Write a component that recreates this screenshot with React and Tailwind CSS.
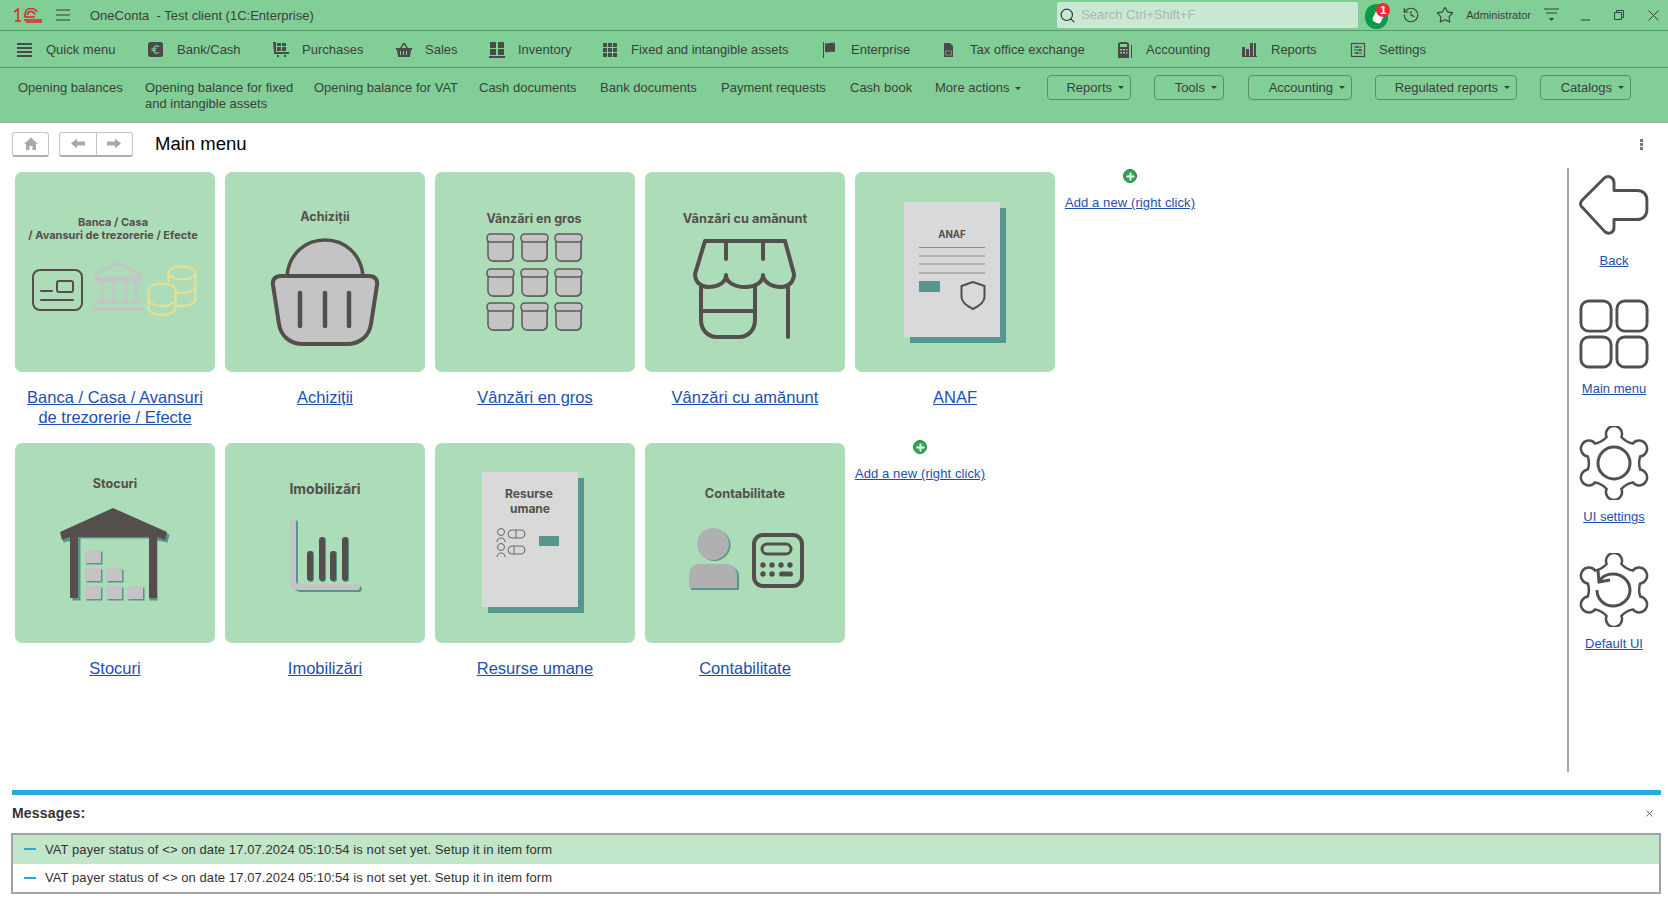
import { Search, History, Star, X, Plus } from "lucide-react";

const ink = "#544f4c";
const gray = "#c4c4c4";
const teal = "#56968f";
const titleFont = "Inter, 'Open Sans', sans-serif";

function TileTitle({ x = 100, y, size = 12, children }) {
  return (
    <text x={x} y={y} textAnchor="middle" fontFamily={titleFont} fontWeight="700" fontSize={size} fill={ink}>
      {children}
    </text>
  );
}

function BancaArt() {
  return (
    <>
      <TileTitle x={98} y={54} size={11}>Banca / Casa</TileTitle>
      <TileTitle x={98} y={67} size={11}>/ Avansuri de trezorerie / Efecte</TileTitle>
      <rect x="18" y="98" width="49" height="40" rx="7" fill="none" stroke={ink} strokeWidth="2" />
      <rect x="42" y="109" width="16" height="11" rx="2" fill="none" stroke={ink} strokeWidth="2" />
      <path d="M26 119H37M26 128H58" stroke={ink} strokeWidth="2" strokeLinecap="round" />
      <path d="M80 106V102L102 91L124 102V106Z" fill="none" stroke={gray} strokeWidth="3" strokeLinejoin="round" />
      <path d="M87 107V129M99 107V129M111 107V129M121 107V129M80 108H127M80 130H125" stroke={gray} strokeWidth="3" />
      <path d="M78 137H127" stroke={gray} strokeWidth="3.5" strokeLinecap="round" />
      <g fill="none" stroke="#ecdf8c" strokeWidth="2">
        <ellipse cx="167" cy="101" rx="13.5" ry="6.5" />
        <path d="M153.500 101V127C153.500 131 160 134 167 134S180.500 131 180.500 127V101M153.500 114C153.500 118 160 121 167 121S180.500 118 180.500 114" />
        <ellipse cx="147" cy="118" rx="13.500" ry="6.500" fill="#addcb9" />
        <path d="M133.500 118V136C133.500 140 140 143 147 143S160.500 140 160.500 136V118M133.500 127C133.500 131 140 134 147 134S160.500 131 160.500 127" fill="#addcb9" />
      </g>
    </>
  );
}

function BasketArt() {
  return (
    <>
      <TileTitle y={49} size={12.5}>Achiziții</TileTitle>
      <path d="M62 104C64 82 80 68 100 68S136 82 138 104Z" fill={gray} stroke={ink} strokeWidth="3.500" />
      <path d="M57 105H145C151 105 154 109 153 114L147 153C145 166 135 173 123 173H79C67 173 57 166 55 153L49 114C48 109 51 105 57 105Z" fill={teal} />
      <path d="M56 104H144C150 104 153 108 152 113L146 152C144 165 134 172 122 172H78C66 172 56 165 54 152L48 113C47 108 50 104 56 104Z" fill={gray} stroke={ink} strokeWidth="4" />
      <path d="M75 121V154M100 121V154M124 121V154" stroke={ink} strokeWidth="4.500" strokeLinecap="round" />
    </>
  );
}

function JarsArt() {
  const xs = [52, 86, 120];
  const ys = [62, 97, 131];
  return (
    <>
      <TileTitle x={99} y={51} size={12.5}>Vânzări en gros</TileTitle>
      {ys.map((y) =>
        xs.map((x) => (
          <g key={x + "-" + y}>
            <rect x={x + 2} y={y + 2} width="25" height="26" rx="5" fill={teal} />
            <rect x={x + 1} y={y + 1} width="25" height="26" rx="5" fill={gray} stroke="#5f5a58" strokeWidth="1.500" />
            <rect x={x} y={y} width="27" height="8" rx="3.500" fill={gray} stroke="#5f5a58" strokeWidth="1.500" />
          </g>
        ))
      )}
    </>
  );
}

function ShopArt() {
  return (
    <>
      <TileTitle y={51} size={12.800}>Vânzări cu amănunt</TileTitle>
      <g fill="none" stroke={ink} strokeWidth="4" strokeLinecap="round" strokeLinejoin="round">
        <path d="M60 69H140L149 102C149 110 143 115 137 115C124 115 118 108 118 103C118 110 111 115 100 115C89 115 81 110 81 103C81 110 74 115 63 115C56 115 50 110 50 102Z" />
        <path d="M81 69V87M118 69V87M143 115V165" />
        <path d="M56 115V148C56 158 63 165 72 165H94C103 165 110 158 110 148V115M56 139H110" />
      </g>
    </>
  );
}

function PaperArt({ x, y, children }) {
  return (
    <>
      <rect x={x + 6} y={y + 6} width="96" height="135" fill={teal} />
      <rect x={x} y={y} width="96" height="135" fill="#d9d9d9" />
      {children}
    </>
  );
}

function AnafArt() {
  return (
    <PaperArt x={49} y={30}>
      <TileTitle x={97} y={66} size={9.700}>ANAF</TileTitle>
      <path d="M64 75.500H130M64 92H130" stroke="#7b7876" strokeWidth="0.800" />
      <path d="M64 84H130M64 101H130" stroke="#a3a2a1" strokeWidth="1.300" />
      <rect x="64" y="109" width="21" height="11" fill={teal} />
      <path d="M118 110L129.500 114V125C129.500 130 124 134 118 137C112 134 106.500 130 106.500 125V114Z" fill="none" stroke={ink} strokeWidth="2" strokeLinejoin="round" />
    </PaperArt>
  );
}

function StockArt() {
  const boxes = [[70, 107], [70, 125], [91, 125], [70, 143], [91, 143], [112, 143]];
  return (
    <>
      <TileTitle x={100} y={45} size={12.600}>Stocuri</TileTitle>
      <path d="M99 66L153 90L151 98L141 96V156H133V94H64V156H56V96L47 98L45 90Z" fill={teal} transform="translate(1.500 1.500)" />
      <path d="M98 65L152 89L150 97L142 94V155H134V94H63V155H55V94L47 97L45 89Z" fill={ink} />
      {boxes.map(([x, y]) => (
        <g key={x + "-" + y}>
          <rect x={x + 1.500} y={y + 1.500} width="16" height="13" fill={teal} />
          <rect x={x} y={y} width="16" height="13" fill={gray} />
        </g>
      ))}
    </>
  );
}

function ChartArt() {
  return (
    <>
      <TileTitle y={51} size={14}>Imobilizări</TileTitle>
      <path d="M69 79V138C69 142 71 145 75 145H133" fill="none" stroke={teal} strokeWidth="6" strokeLinecap="round" transform="translate(1 1)" />
      <path d="M68 79V138C68 142 70 144 74 144H132" fill="none" stroke={gray} strokeWidth="6" strokeLinecap="round" />
      {[[85, 111], [97, 97], [108, 111], [120, 97]].map(([x, y]) => (
        <g key={x}>
          <path d={`M${x + 1} ${y}V136`} stroke={teal} strokeWidth="6" strokeLinecap="round" />
          <path d={`M${x} ${y}V135`} stroke={ink} strokeWidth="6" strokeLinecap="round" />
        </g>
      ))}
    </>
  );
}

function HrArt() {
  return (
    <PaperArt x={47} y={29}>
      <TileTitle x={94} y={55} size={12}>Resurse</TileTitle>
      <TileTitle x={95} y={70} size={12}>umane</TileTitle>
      <g fill="none" stroke="#6b6563" strokeWidth="1">
        <circle cx="66" cy="89" r="3.500" />
        <path d="M62 99C62 96 64 95 66 95S70 96 70 99" />
        <rect x="73" y="87" width="17" height="8" rx="4" />
        <path d="M81 87V95" />
        <circle cx="66" cy="104" r="3.500" />
        <path d="M62 114C62 111 64 110 66 110S70 111 70 114" />
        <rect x="73" y="103" width="17" height="8" rx="4" />
        <path d="M79 103V111" />
      </g>
      <rect x="104" y="93" width="20" height="10" fill={teal} />
    </PaperArt>
  );
}

function AccountingArt() {
  return (
    <>
      <TileTitle y={55} size={12.800}>Contabilitate</TileTitle>
      <circle cx="69.500" cy="102" r="16" fill={teal} />
      <circle cx="68" cy="101" r="16" fill="#b0b0b0" />
      <path d="M46 146V133C46 126 51 122 57 122H81C88 122 94 126 94 133V147H46Z" fill={teal} />
      <path d="M44 145V132C44 125 49 121 56 121H80C87 121 92 125 92 132V145Z" fill="#b0b0b0" />
      <rect x="109" y="92" width="48" height="51" rx="9" fill="none" stroke={ink} strokeWidth="4" />
      <rect x="117" y="101" width="29" height="10" rx="5" fill="none" stroke={ink} strokeWidth="3" />
      {[118, 127, 136, 145].map((x) => <circle key={x} cx={x} cy="122" r="2.700" fill={ink} />)}
      {[118, 127].map((x) => <circle key={x} cx={x} cy="131" r="2.700" fill={ink} />)}
      <rect x="134" y="128.500" width="14" height="5" rx="2.500" fill={ink} />
    </>
  );
}

function Tile({ label, children }) {
  return (
    <div className="w-[200px] h-[271px] shrink-0">
      <div className="w-[200px] h-[200px] rounded-[7px] bg-[#addcb9]">
        <svg viewBox="0 0 200 200" width="200" height="200">{children}</svg>
      </div>
      <a className="block mt-[15px] px-[6px] text-center text-[16.5px] leading-[20px] text-[#1c4fb0] underline">{label}</a>
    </div>
  );
}

function AddNew() {
  return (
    <div className="w-[130px] shrink-0 flex flex-col items-center text-[13px] tracking-[0.1px] text-[#1c4fb0] underline">
      <span className="mt-[-3px] w-[14px] h-[14px] rounded-full bg-[#2fa84f] border border-[#1d8a3c] flex items-center justify-center">
        <Plus size={11} strokeWidth={4} color="#fff" />
      </span>
      <a className="mt-[12px] leading-[16px] whitespace-nowrap">Add a new (right click)</a>
    </div>
  );
}

function gearPath(cx, cy) {
  let d = "";
  const pt = (deg, r) => {
    const a = (deg * Math.PI) / 180;
    return (cx + r * Math.cos(a)).toFixed(1) + " " + (cy + r * Math.sin(a)).toFixed(1);
  };
  for (let i = 0; i < 6; i++) {
    const a = -90 + i * 60;
    d += (i === 0 ? "M" : "L") + pt(a - 16, 27) + "A8 8 0 1 1 " + pt(a + 16, 27);
    d += "Q" + pt(a + 30, 24) + " " + pt(a + 44, 27);
  }
  return d + "Z";
}

function SideItem({ label, children, className, labelClass }) {
  return (
    <div className={"flex flex-col items-center " + className}>
      {children}
      <a className={"text-[13px] leading-[16px] text-[#1c4fb0] underline " + labelClass}>{label}</a>
    </div>
  );
}

// small menu glyphs
const MenuIcons = {
  quick: <path d="M0 1H15V3H0ZM0 5H15V7H0ZM0 9H15V11H0ZM0 13H15V15H0Z" />,
  bank: <><rect x="0" y="0" width="15" height="15" rx="2.500" /><path d="M11 4.500C8 3 6 4.500 5.500 7.500C6 11 8 12 11 10.500" fill="none" stroke="#81cf97" strokeWidth="1.300" /><path d="M3.500 6.800H8.500M3.500 8.500H8" stroke="#81cf97" /></>,
  purchases: <path d="M0 0H3V10H16V12H1V10ZM4 1H8V4H4ZM9 1H13V4H9ZM4 5H8V9H4ZM9 5H13V9H9ZM4 13H6V15H4ZM11 13H13V15H11Z" />,
  sales: <path d="M0 6H4L7 1H9L12 6H16V8H15L14 15H2L1 8H0ZM5.500 6H10.500L8 2.500ZM4 9V13H5V9ZM7 9V13H8V9ZM10 9V13H11V9Z" fillRule="evenodd" />,
  inventory: <path d="M1 0H7V6H1ZM9 0H15V6H9ZM1 7H7V13H1ZM9 7H15V13H9ZM0 14H16V16H0Z" />,
  fixed: <path d="M1 1H5V5H1ZM6 1H10V5H6ZM11 1H15V5H11ZM1 6H5V10H1ZM6 6H10V10H6ZM11 6H15V10H11ZM1 11H5V15H1ZM6 11H10V15H6ZM11 11H15V15H11Z" />,
  enterprise: <path d="M1 0H2V16H1ZM3 1C6 2.500 8 0 13 1V10C8 9 6 11 3 10Z" />,
  tax: <><path d="M3 1H9L12 4V15H3Z" /><path d="M4.500 9H10.500V13H4.500Z" fill="none" stroke="#81cf97" strokeWidth="0.600" /></>,
  accounting: <><path d="M1 3C1 1 2 0 4 0H9C11 0 12 1 12 3V16H1Z" /><rect x="3" y="2" width="7" height="3" fill="#81cf97" /><path d="M3 7H5V8.500H3ZM6 7H8V8.500H6ZM9 7H10.500V8.500H9ZM3 10H5V11.500H3ZM6 10H8V11.500H6ZM9 10H10.500V11.500H9Z" fill="#81cf97" /><path d="M14 3H15V16H14Z" /></>,
  reports: <path d="M0 5H3V14H0ZM4 7H7V14H4ZM8 1H11V14H8ZM12 1H14V14H12ZM0 14H15V15H0Z" />,
  settings: <><rect x="1.500" y="1.500" width="13" height="13" fill="none" stroke="#4a4a4a" strokeWidth="1.200" /><path d="M4 5H12M4 8H12M4 11H12" stroke="#4a4a4a" /><path d="M6 4H8V6H6ZM9 7H11V9H9ZM6 10H8V12H6Z" /></>,
};

const menuItems = [
  ["quick", "Quick menu", "w-[131px]"],
  ["bank", "Bank/Cash", "w-[125px]"],
  ["purchases", "Purchases", "w-[123px]"],
  ["sales", "Sales", "w-[93px]"],
  ["inventory", "Inventory", "w-[113px]"],
  ["fixed", "Fixed and intangible assets", "w-[220px]"],
  ["enterprise", "Enterprise", "w-[119px]"],
  ["tax", "Tax office exchange", "w-[176px]"],
  ["accounting", "Accounting", "w-[125px]"],
  ["reports", "Reports", "w-[108px]"],
  ["settings", "Settings", "w-[90px]"],
];

const actions = [
  ["Opening balances", "w-[127px]"],
  ["Opening balance for fixed and intangible assets", "w-[169px]"],
  ["Opening balance for VAT", "w-[165px]"],
  ["Cash documents", "w-[121px]"],
  ["Bank documents", "w-[121px]"],
  ["Payment requests", "w-[129px]"],
  ["Cash book", "w-[85px]"],
];

const dropdowns = [
  ["Reports", "w-[84px] mr-[23px]"],
  ["Tools", "w-[70px] mr-[24px]"],
  ["Accounting", "w-[104px] mr-[23px]"],
  ["Regulated reports", "w-[142px] mr-[23px]"],
  ["Catalogs", "w-[91px]"],
];

function Caret() {
  return <span className="inline-block ml-[6px] align-middle w-0 h-0 border-x-[3px] border-x-transparent border-t-[3px] border-t-[#3b3f3b]" />;
}

export default function App() {
  return (
    <div className="w-[1668px] h-[906px] overflow-hidden bg-white flex flex-col text-[#3b3f3b] font-['Liberation_Sans',Arial,sans-serif]">
      {/* title bar */}
      <header className="h-[31px] shrink-0 bg-[#81cf97] border-b border-[#529a69] flex items-center pr-[9px] text-[13px]">
        <svg width="28" height="16" viewBox="0 0 28 16" className="ml-[14px]" fill="none" stroke="#e3252b" strokeWidth="1.600">
          <path d="M0 5L4 2V14M1 14H7" />
          <path d="M21 10H11V8C11 4 13 1.500 17 1.500C20 1.500 22 3 23 5" />
          <path d="M21 7.500C20 5.500 19 4.500 17 4.500C15 4.500 13.500 6 13.500 8" />
          <path d="M10 13H28M12 15H28" />
        </svg>
        <svg width="14" height="12" viewBox="0 0 14 12" className="ml-[14px]" stroke="#3b3f3b" strokeWidth="1.200">
          <path d="M0 1H14M0 6H14M0 11H14" />
        </svg>
        <span className="ml-[20px] pt-[1px] whitespace-pre">OneConta  - Test client (1C:Enterprise)</span>
        <div className="ml-auto w-[301px] h-[26px] rounded-[2px] bg-[#c9e9d2] flex items-center pl-[2px] text-[#a9b8ad]">
          <Search size={17} color="#333" strokeWidth={1.600} />
          <span className="ml-[5px]">Search Ctrl+Shift+F</span>
        </div>
        <div className="relative ml-[7px] w-[24px] h-[26px] mr-[9px]">
          <span className="absolute left-0 top-[2px] w-[23px] h-[25px] rounded-full bg-[#0b9a4a]" />
          <span className="absolute left-[9px] top-[8px] w-[9px] h-[13px] rounded-[3px] rotate-[25deg] bg-white" />
          <span className="absolute left-[11px] top-[1px] w-[14px] h-[14px] rounded-full bg-[#ee2b2f] text-white text-[11px] leading-[14px] text-center font-bold">1</span>
        </div>
        <History size={18} strokeWidth={1.500} color="#3b3f3b" className="ml-[4px]" />
        <Star size={18} strokeWidth={1.500} color="#3b3f3b" className="ml-[16px]" />
        <span className="ml-[12px] text-[11px]">Administrator</span>
        <svg width="15" height="14" viewBox="0 0 15 14" className="ml-[13px]" stroke="#3b3f3b">
          <path d="M0 1H15M2 5H13" />
          <path d="M5 10H10L7.500 13Z" fill="#3b3f3b" stroke="none" />
        </svg>
        <svg width="10" height="12" viewBox="0 0 10 12" className="ml-[22px]" stroke="#3b3f3b"><path d="M0 11H9" /></svg>
        <svg width="10" height="10" viewBox="0 0 10 10" className="ml-[23px]" fill="none" stroke="#3b3f3b"><path d="M0.500 2.500H7.500V9.500H0.500ZM2.500 2.500V0.500H9.500V7.500H7.500" /></svg>
        <svg width="11" height="11" viewBox="0 0 11 11" className="ml-[24px]" stroke="#3b3f3b"><path d="M0.500 0.500L10.500 10.500M10.500 0.500L0.500 10.500" /></svg>
      </header>

      {/* sections */}
      <nav className="h-[37px] shrink-0 bg-[#81cf97] border-b border-[#529a69] flex items-center pl-[17px] pt-[1px] text-[13px]">
        {menuItems.map(([icon, label, width]) => (
          <div key={label} className={"flex items-center shrink-0 " + width}>
            <svg width="16" height="16" viewBox="0 0 16 16" fill="#4a4a4a" className="shrink-0">{MenuIcons[icon]}</svg>
            <span className="ml-[13px] whitespace-nowrap">{label}</span>
          </div>
        ))}
      </nav>

      {/* actions */}
      <div className="h-[55px] shrink-0 bg-[#81cf97] border-b-2 border-[#a9b0aa] flex items-start pl-[18px] pt-[7px] text-[13px] leading-[16px]">
        {actions.map(([label, width]) => (
          <span key={label} className={"shrink-0 pt-[5px] " + width}>{label}</span>
        ))}
        <span className="shrink-0 w-[112px] pt-[5px] whitespace-nowrap">More actions<Caret /></span>
        {dropdowns.map(([label, cls]) => (
          <button key={label} className={"shrink-0 h-[25px] rounded-[4px] border border-[#5b8f6c] flex items-center justify-end pr-[6px] " + cls}>
            {label}<Caret />
          </button>
        ))}
      </div>

      {/* page header */}
      <div className="h-[41px] shrink-0 flex items-center pl-[12px] pt-[1px]">
        <div className="w-[37px] h-[25px] rounded-[3px] border border-[#c6c6c6] border-b-2 border-b-[#aeaeae] flex items-center justify-center">
          <svg width="14" height="13" viewBox="0 0 14 13" fill="#a9a9a9"><path d="M0 7L7 0.500L14 7H12V13H8.500V9H5.500V13H2V7Z" /></svg>
        </div>
        <div className="ml-[10px] w-[74px] h-[25px] rounded-[3px] border border-[#c6c6c6] border-b-2 border-b-[#aeaeae] flex items-center">
          <span className="flex-1 flex items-center justify-center border-r border-[#c6c6c6] h-full">
            <svg width="14" height="11" viewBox="0 0 14 11" fill="#a9a9a9"><path d="M0 5.500L6 0.500V3.500H14V7.500H6V10.500Z" /></svg>
          </span>
          <span className="flex-1 flex items-center justify-center">
            <svg width="14" height="11" viewBox="0 0 14 11" fill="#a9a9a9"><path d="M14 5.500L8 0.500V3.500H0V7.500H8V10.500Z" /></svg>
          </span>
        </div>
        <h1 className="ml-[22px] text-[18.5px] text-black">Main menu</h1>
        <div className="ml-auto mr-[25px] flex flex-col gap-[1px]">
          <span className="w-[3px] h-[3px] bg-[#777]" />
          <span className="w-[3px] h-[3px] bg-[#777]" />
          <span className="w-[3px] h-[3px] bg-[#777]" />
        </div>
      </div>

      {/* tiles + side panel */}
      <main className="flex-1 min-h-0 flex">
        <div className="w-[1567px] shrink-0 pl-[15px] pt-[8px]">
          <div className="flex gap-[10px]">
            <Tile label="Banca / Casa / Avansuri de trezorerie / Efecte"><BancaArt /></Tile>
            <Tile label="Achiziții"><BasketArt /></Tile>
            <Tile label="Vânzări en gros"><JarsArt /></Tile>
            <Tile label="Vânzări cu amănunt"><ShopArt /></Tile>
            <Tile label="ANAF"><AnafArt /></Tile>
            <AddNew />
          </div>
          <div className="flex gap-[10px]">
            <Tile label="Stocuri"><StockArt /></Tile>
            <Tile label="Imobilizări"><ChartArt /></Tile>
            <Tile label="Resurse umane"><HrArt /></Tile>
            <Tile label="Contabilitate"><AccountingArt /></Tile>
            <AddNew />
          </div>
        </div>
        <aside className="w-[92px] h-[604px] mt-[4px] shrink-0 border-l-2 border-[#a3a3a3] flex flex-col items-center">
          <SideItem label="Back" className="mt-[7px]" labelClass="mt-[18px]">
            <svg width="72" height="60" viewBox="0 0 72 62" fill="none" stroke={ink} strokeWidth="3" strokeLinejoin="round">
              <path d="M2 32C1 30 1 28 3 26L26 3C30 -0 36 2 36 8V16H60C66 16 70 20 70 26V36C70 42 66 46 60 46H36V54C36 60 30 62 26 58Z" />
            </svg>
          </SideItem>
          <SideItem label="Main menu" className="mt-[30px]" labelClass="mt-[12px]">
            <svg width="70" height="70" viewBox="0 0 72 72" fill="none" stroke={ink} strokeWidth="3">
              <rect x="2" y="2" width="31" height="31" rx="8" />
              <rect x="39" y="2" width="31" height="31" rx="8" />
              <rect x="2" y="39" width="31" height="31" rx="8" />
              <rect x="39" y="39" width="31" height="31" rx="8" />
            </svg>
          </SideItem>
          <SideItem label="UI settings" className="mt-[29px]" labelClass="mt-[9px]">
            <svg width="72" height="74" viewBox="0 0 72 74" fill="none" stroke={ink} strokeWidth="2.500">
              <path d={gearPath(36, 37)} />
              <circle cx="36" cy="37" r="16" strokeWidth="3" />
            </svg>
          </SideItem>
          <SideItem label="Default UI" className="mt-[28px]" labelClass="mt-[9px]">
            <svg width="72" height="74" viewBox="0 0 72 74" fill="none" stroke={ink} strokeWidth="2.500">
              <path d={gearPath(36, 37)} />
              <path d="M22 27C25 23 30 21 35 21C44 21 52 28 52 37C52 46 44 53 35 53C26 53 19 46 19 37" strokeWidth="3" />
              <path d="M20 17L21 29L32 27" strokeWidth="3" />
            </svg>
          </SideItem>
        </aside>
      </main>

      {/* messages */}
      <section className="h-[116px] shrink-0 pl-[12px] pr-[7px]">
        <div className="h-[5px] bg-[#27a9e1]" />
        <div className="h-[38px] flex items-center justify-between pr-[6px] pb-[1px]">
          <strong className="text-[14px] tracking-[0.2px] text-[#333]">Messages:</strong>
          <X size={11} color="#555" />
        </div>
        <div className="-ml-[1px] border-2 border-[#a3a3a3] text-[13px] tracking-[0.08px] text-[#333]">
          {[0, 1].map((i) => (
            <div key={i} className={"h-[28.500px] flex items-center pl-[11px] " + (i === 0 ? "bg-[#c1e6ca]" : "bg-white")}>
              <span className="w-[12px] h-[2px] bg-[#27a9e1] mr-[9px]" />
              VAT payer status of &lt;&gt; on date 17.07.2024 05:10:54 is not set yet. Setup it in item form
            </div>
          ))}
        </div>
      </section>
    </div>
  );
}
